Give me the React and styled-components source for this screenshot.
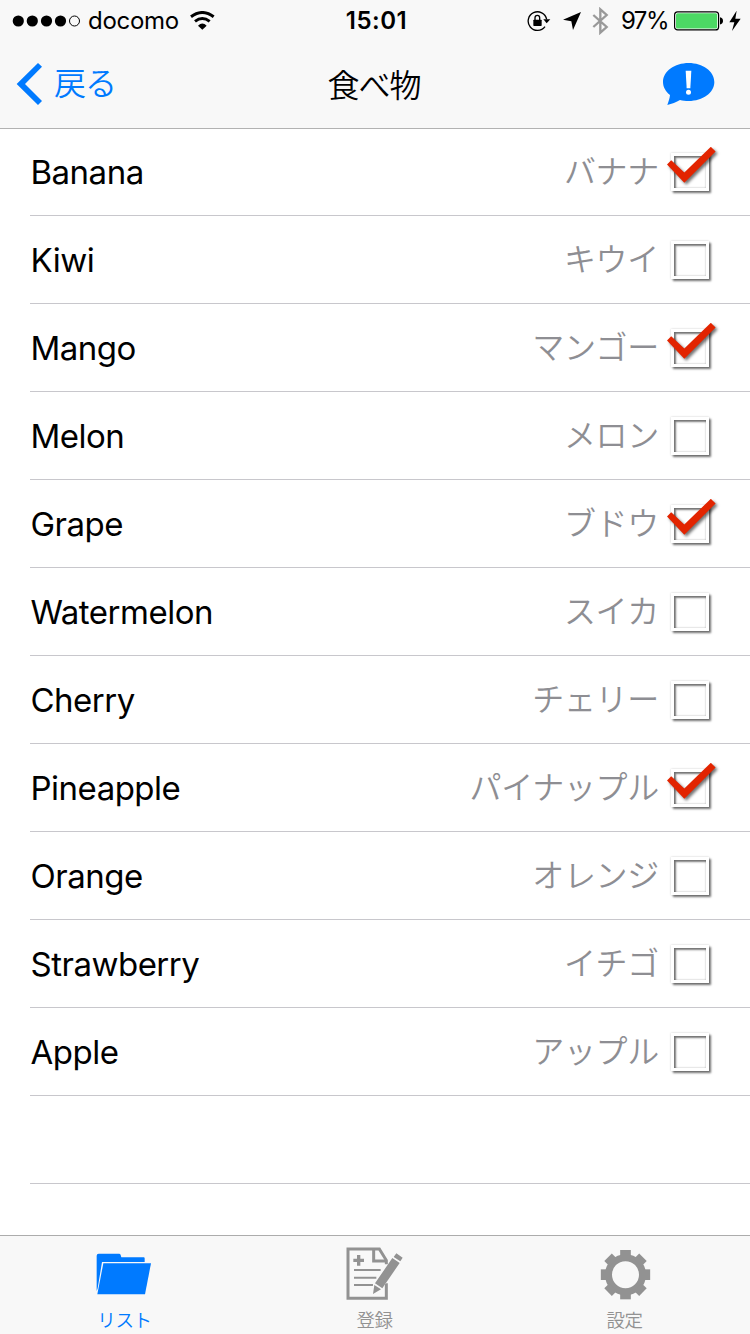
import { useState } from "react";
import styled, { createGlobalStyle } from "styled-components";

const GlobalStyle = createGlobalStyle`
  * {
    box-sizing: border-box;
  }
  body {
    margin: 0;
    background-color: #fff;
    font-family: Inter, "Noto Sans CJK JP", sans-serif;
  }
`;

const Screen = styled.div`
  width: 750px;
  height: 1334px;
  display: flex;
  flex-direction: column;
  overflow: hidden;
  background-color: #fff;
`;

const Header = styled.header`
  position: relative;
  flex: none;
  height: 128px;
  background-color: #f8f8f8;
  box-shadow: 0 1px 0 #b2b2b2;
`;

const StatusBar = styled.div`
  height: 40px;
  display: grid;
  grid-template-columns: 1fr auto 1fr;
  align-items: center;
  padding: 1px 9px 0 12px;
  font-size: 24px;
  line-height: 39px;
  color: #000;
  svg {
    display: block;
    flex: none;
  }
`;

const StatusGroup = styled.div`
  display: flex;
  align-items: center;
  justify-content: ${({ $end }) => ($end ? "flex-end" : "flex-start")};
`;

const Carrier = styled.span`
  margin: 0 11px 0 7px;
  letter-spacing: -0.3px;
`;

const Clock = styled.span`
  font-weight: 600;
  letter-spacing: 0.5px;
`;

const Percent = styled.span`
  margin: 0 6px 0 12px;
  letter-spacing: -1.5px;
`;

const LocationGap = styled.span`
  margin: 0 11px 0 12px;
`;

const BoltGap = styled.span`
  margin-left: 5px;
`;

const NavBar = styled.nav`
  height: 88px;
  display: grid;
  grid-template-columns: 1fr auto 1fr;
  align-items: center;
  padding: 0 16px;
  svg {
    display: block;
  }
`;

const BackButton = styled.button`
  display: flex;
  align-items: center;
  gap: 11px;
  padding: 0;
  border: none;
  background: none;
  color: #007aff;
  font-family: inherit;
  font-size: 32px;
  font-weight: 350;
  letter-spacing: -1px;
  cursor: pointer;
`;

const BackLabel = styled.span`
  line-height: 44px;
`;

const Title = styled.h1`
  margin: -3px 2px 0 0;
  font-size: 32px;
  font-weight: 350;
  letter-spacing: -1px;
`;

const InfoButton = styled.button`
  justify-self: end;
  margin-right: 19px;
  padding: 0;
  border: none;
  background: none;
  cursor: pointer;
`;

const List = styled.ul`
  flex: 1;
  min-height: 0;
  overflow: hidden;
  margin: 0;
  padding: 0 0 0 30px;
  list-style: none;
`;

const Row = styled.li`
  height: 88px;
  display: flex;
  align-items: center;
  padding-right: 41px;
  border-bottom: 1px solid #c8c7cc;
  cursor: pointer;
`;

const Name = styled.span`
  flex: 1;
  padding: 1px 0 0 0.5px;
  font-size: 33px;
  line-height: 86px;
  letter-spacing: -0.5px;
`;

const Translation = styled.span`
  margin-right: 12px;
  font-size: 32px;
  font-weight: 350;
  line-height: 86px;
  letter-spacing: -0.3px;
  color: #8e8e93;
`;

const CheckBox = styled.span`
  position: relative;
  width: 38px;
  height: 38px;
  margin-top: 1px;
  border: 3px solid #fff;
  box-shadow: 2px 2px 2px rgba(0, 0, 0, 0.55), 0 0 2px rgba(0, 0, 0, 0.2);
  &::before {
    content: "";
    display: block;
    height: 100%;
    box-shadow: inset 2px 2px 2px rgba(0, 0, 0, 0.5), inset 0 0 2px rgba(0, 0, 0, 0.35);
  }
  svg {
    position: absolute;
    left: -7px;
    top: -9px;
    filter: drop-shadow(2px 2px 1.5px rgba(0, 0, 0, 0.55));
  }
`;

const TabBar = styled.footer`
  flex: none;
  height: 99px;
  display: grid;
  grid-template-columns: repeat(3, 1fr);
  background-color: #f8f8f8;
  border-top: 1px solid #acacac;
`;

const Tab = styled.button`
  display: flex;
  flex-direction: column;
  align-items: center;
  padding: 0;
  border: none;
  background: none;
  font-family: inherit;
  color: ${({ $active }) => ($active ? "#007aff" : "#929292")};
  cursor: pointer;
`;

const TabLabel = styled.span`
  margin: 6px 1px 0 0;
  font-size: 18.5px;
  font-weight: 350;
  line-height: 28px;
  letter-spacing: -0.4px;
`;

const SignalIcon = () => (
  <svg width="69" height="12" viewBox="0 0 69 12">
    {[6.3, 20.3, 34.5, 48.5].map((x) => (
      <circle key={x} cx={x} cy="6" r="5.6" />
    ))}
    <circle cx="62.5" cy="6" r="5" fill="none" stroke="#000" />
  </svg>
);

const WifiIcon = () => (
  <svg width="25" height="20" viewBox="570 32 75 60">
    <path d="M573 49Q607 24 641 49" fill="none" stroke="#000" strokeWidth="9" />
    <path d="M585 63Q607 46 629 63" fill="none" stroke="#000" strokeWidth="9" />
    <path d="M594 76Q607 63 620 76L607 88Z" />
  </svg>
);

const RotationLockIcon = () => (
  <svg width="24" height="22" viewBox="50 28 72 66">
    <path d="M104 78A28 28 0 1 1 109 56" fill="none" stroke="#000" strokeWidth="4" />
    <path d="M99 56H120L109 68Z" />
    <rect x="69" y="57" width="25" height="19" rx="2" />
    <path d="M74 58V51a7 7 0 0 1 14 0V58" fill="none" stroke="#000" strokeWidth="4" />
  </svg>
);

const LocationIcon = () => (
  <svg width="18" height="18" viewBox="157 35 54 54">
    <path d="M157 58L211 35L187 89L182 63Z" />
  </svg>
);

const BluetoothIcon = () => (
  <svg width="17" height="28" viewBox="245 19 51 84">
    <path
      d="M249 43L289 79L270 96V26L289 43L249 79"
      fill="none"
      stroke="#999"
      strokeWidth="7"
    />
  </svg>
);

const BatteryIcon = () => (
  <svg width="50" height="20" viewBox="0 0 50 20">
    <rect x="0.6" y="0.9" width="44" height="18" rx="3" fill="#fff" stroke="#000" strokeWidth="1.2" />
    <rect x="2" y="2.3" width="41.2" height="15.2" rx="1.6" fill="#4cd964" />
    <path d="M46 6.3q3 .7 3 3.6t-3 3.6z" />
  </svg>
);

const BoltIcon = () => (
  <svg width="12" height="20" viewBox="655 30 36 60">
    <path d="M678 29L656 64H671L664 90L690 53H674Z" />
  </svg>
);

const BackIcon = () => (
  <svg width="27" height="44" viewBox="48 186 81 132">
    <path d="M50 252L114 189L126 200L75 252L126 303L114 315Z" fill="#007aff" />
  </svg>
);

const BubbleIcon = () => (
  <svg width="52" height="44" viewBox="458 186 156 132">
    <path
      d="M535 189C577 189 612 214 612 246S577 303 535 303C525 303 517 302 509 300C498 307 484 312 471 315C475 304 478 295 479 285C466 275 458 261 458 246C458 214 493 189 535 189Z"
      fill="#007aff"
    />
    <path d="M526 212H543L540 265H529Z" fill="#fff" />
    <circle cx="534.5" cy="277" r="7.5" fill="#fff" />
  </svg>
);

const CheckIcon = () => (
  <svg width="52" height="40" viewBox="0 0 52 40">
    <path d="M0 17.5L4.2 13.2L17.3 25.6L43.8 -0.2L48.6 4.4L17.3 35.8Z" fill="#e22400" />
  </svg>
);

const FolderIcon = () => (
  <svg width="110" height="64" viewBox="0 33 330 192" fill="currentColor">
    <path d="M80 92Q80 86 86 86H147Q151 86 152 90L154 97H221Q224 97 224 100V111H96L83 190L80 198Z" />
    <path d="M100 115H243L225 208H82Z" />
  </svg>
);

const NoteIcon = () => (
  <svg width="110" height="64" viewBox="0 33 330 192">
    <path d="M199 118V106L178 72H84V220H199V175" fill="none" stroke="currentColor" strokeWidth="9" />
    <path d="M161 72V108H200" fill="none" stroke="currentColor" strokeWidth="9" />
    <path d="M116 90V122M100 106H132" stroke="currentColor" strokeWidth="10" />
    <path d="M102 135H182M102 158H169M102 180H159" stroke="currentColor" strokeWidth="6" />
    <path d="M231 81L252 96L182 197L155 213L159 180Z" fill="#f8f8f8" />
    <path d="M229 85L248 98L241 109L221 96ZM217 99L239 114L187 190L165 175ZM163 180L183 193L159 207Z" fill="currentColor" />
  </svg>
);

const GearIcon = () => (
  <svg width="110" height="64" viewBox="0 33 330 192">
    <circle cx="166.5" cy="149" r="51" fill="none" stroke="currentColor" strokeWidth="21" />
    {[0, 45, 90, 135, 180, 225, 270, 315].map((deg) => (
      <path key={deg} d="M150.500 75H182.500V97H150.500Z" fill="currentColor" transform={`rotate(${deg} 166.5 149)`} />
    ))}
  </svg>
);

const foods = [
  { name: "Banana", ja: "バナナ", checked: true },
  { name: "Kiwi", ja: "キウイ", checked: false },
  { name: "Mango", ja: "マンゴー", checked: true },
  { name: "Melon", ja: "メロン", checked: false },
  { name: "Grape", ja: "ブドウ", checked: true },
  { name: "Watermelon", ja: "スイカ", checked: false },
  { name: "Cherry", ja: "チェリー", checked: false },
  { name: "Pineapple", ja: "パイナップル", checked: true },
  { name: "Orange", ja: "オレンジ", checked: false },
  { name: "Strawberry", ja: "イチゴ", checked: false },
  { name: "Apple", ja: "アップル", checked: false },
];

const tabs = [
  { label: "リスト", Icon: FolderIcon },
  { label: "登録", Icon: NoteIcon },
  { label: "設定", Icon: GearIcon },
];

const App = () => {
  const [items, setItems] = useState(foods);
  const [activeTab, setActiveTab] = useState(0);

  const toggle = (name) => {
    setItems(items.map((item) => (item.name === name ? { ...item, checked: !item.checked } : item)));
  };

  return (
    <Screen>
      <GlobalStyle />
      <Header>
        <StatusBar>
          <StatusGroup>
            <SignalIcon />
            <Carrier>docomo</Carrier>
            <WifiIcon />
          </StatusGroup>
          <Clock>15:01</Clock>
          <StatusGroup $end>
            <RotationLockIcon />
            <LocationGap>
              <LocationIcon />
            </LocationGap>
            <BluetoothIcon />
            <Percent>97%</Percent>
            <BatteryIcon />
            <BoltGap>
              <BoltIcon />
            </BoltGap>
          </StatusGroup>
        </StatusBar>
        <NavBar>
          <BackButton>
            <BackIcon />
            <BackLabel>戻る</BackLabel>
          </BackButton>
          <Title>食べ物</Title>
          <InfoButton>
            <BubbleIcon />
          </InfoButton>
        </NavBar>
      </Header>

      <List>
        {items.map((item) => (
          <Row key={item.name} onClick={() => toggle(item.name)}>
            <Name>{item.name}</Name>
            <Translation>{item.ja}</Translation>
            <CheckBox>{item.checked && <CheckIcon />}</CheckBox>
          </Row>
        ))}
        <Row />
      </List>

      <TabBar>
        {tabs.map(({ label, Icon }, i) => (
          <Tab key={label} $active={i === activeTab} onClick={() => setActiveTab(i)}>
            <Icon />
            <TabLabel>{label}</TabLabel>
          </Tab>
        ))}
      </TabBar>
    </Screen>
  );
};

export default App;
